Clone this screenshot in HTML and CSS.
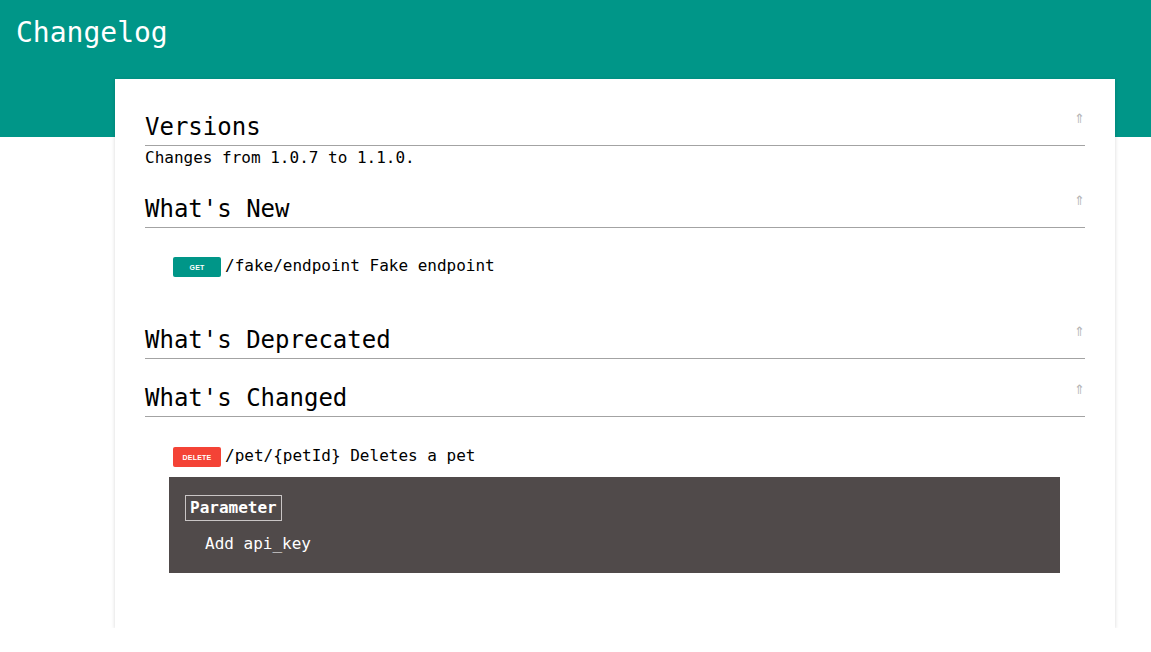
FILE: index.html
```html
<!DOCTYPE html>
<html>
<head>
<meta charset="utf-8">
<title>Changelog</title>
<link rel="stylesheet" href="styles.css">
</head>
<body>
<header class="topbar">
  <h1 class="title">Changelog</h1>
</header>
<main class="card">
  <section class="sec sec-versions">
    <h2 class="sec-title">Versions<a class="up" href="#">⇑</a></h2>
    <p class="versions-text">Changes from 1.0.7 to 1.1.0.</p>
  </section>
  <section class="sec sec-new">
    <h2 class="sec-title">What's New<a class="up" href="#">⇑</a></h2>
    <div class="endpoint ep-new">
      <span class="badge badge-get">GET</span>
      <span class="ep-text">/fake/endpoint Fake endpoint</span>
    </div>
  </section>
  <section class="sec sec-deprecated">
    <h2 class="sec-title">What's Deprecated<a class="up" href="#">⇑</a></h2>
  </section>
  <section class="sec sec-changed">
    <h2 class="sec-title">What's Changed<a class="up" href="#">⇑</a></h2>
    <div class="endpoint ep-changed">
      <span class="badge badge-delete">DELETE</span>
      <span class="ep-text">/pet/{petId} Deletes a pet</span>
    </div>
    <div class="detail">
      <div class="detail-label">Parameter</div>
      <div class="detail-item">Add api_key</div>
    </div>
  </section>
</main>
</body>
</html>
```
FILE: styles.css
```css
html, body {
  margin: 0;
  padding: 0;
  background: #ffffff;
}
body {
  font-family: "DejaVu Sans Mono", "Liberation Mono", monospace;
  font-size: 16px;
  color: #000;
}
.topbar {
  background: #009688;
  height: 137px;
}
.title {
  margin: 0;
  padding: 16px 16px 0;
  font-size: 28px;
  line-height: 33px;
  font-weight: normal;
  color: #fff;
}
.card {
  display: block;
  margin: -58px 0 0 115px;
  width: 1000px;
  box-sizing: border-box;
  padding: 34px 30px 55px;
  background: #fff;
  box-shadow: 0 1px 4px rgba(0,0,0,0.16);
  position: relative;
}
.sec-title {
  margin: 0;
  font-size: 24px;
  line-height: 28px;
  font-weight: normal;
  padding-bottom: 4px;
  border-bottom: 1px solid #a3a3a3;
}
.up {
  float: right;
  font-family: "DejaVu Sans", sans-serif;
  font-size: 13px;
  line-height: 12px;
  margin-right: 0;
  color: #b5b5b5;
  text-decoration: none;
}
.versions-text {
  margin: 3px 0 0;
  line-height: 18px;
}
.sec-new { margin-top: 28px; }
.sec-deprecated { margin-top: 49px; }
.sec-changed { margin-top: 25px; }
.endpoint {
  display: flex;
  align-items: center;
  gap: 4px;
  margin-left: 28px;
  height: 20px;
}
.ep-new { margin-top: 29px; }
.ep-changed { margin-top: 30px; }
.ep-text {
  line-height: 18px;
  position: relative;
  top: -1px;
}
.badge {
  width: 48px;
  height: 20px;
  border-radius: 2px;
  display: flex;
  align-items: center;
  justify-content: center;
  color: #fff;
  font-family: "Liberation Sans", Arial, sans-serif;
  font-weight: bold;
  font-size: 7px;
  letter-spacing: 0.2px;
}
.badge-get { background: #009688; }
.badge-delete { background: #f44336; }
.detail {
  margin: 10px 25px 0 24px;
  background: #504a4a;
  color: #fff;
  padding: 18px 16px 20px;
  height: 96px;
  box-sizing: border-box;
}
.detail-label {
  display: inline-block;
  border: 1px solid #c9c5c5;
  padding: 0 4px;
  line-height: 24px;
  font-weight: bold;
}
.detail-item {
  margin: 14px 0 0 20px;
  line-height: 18px;
}
```
